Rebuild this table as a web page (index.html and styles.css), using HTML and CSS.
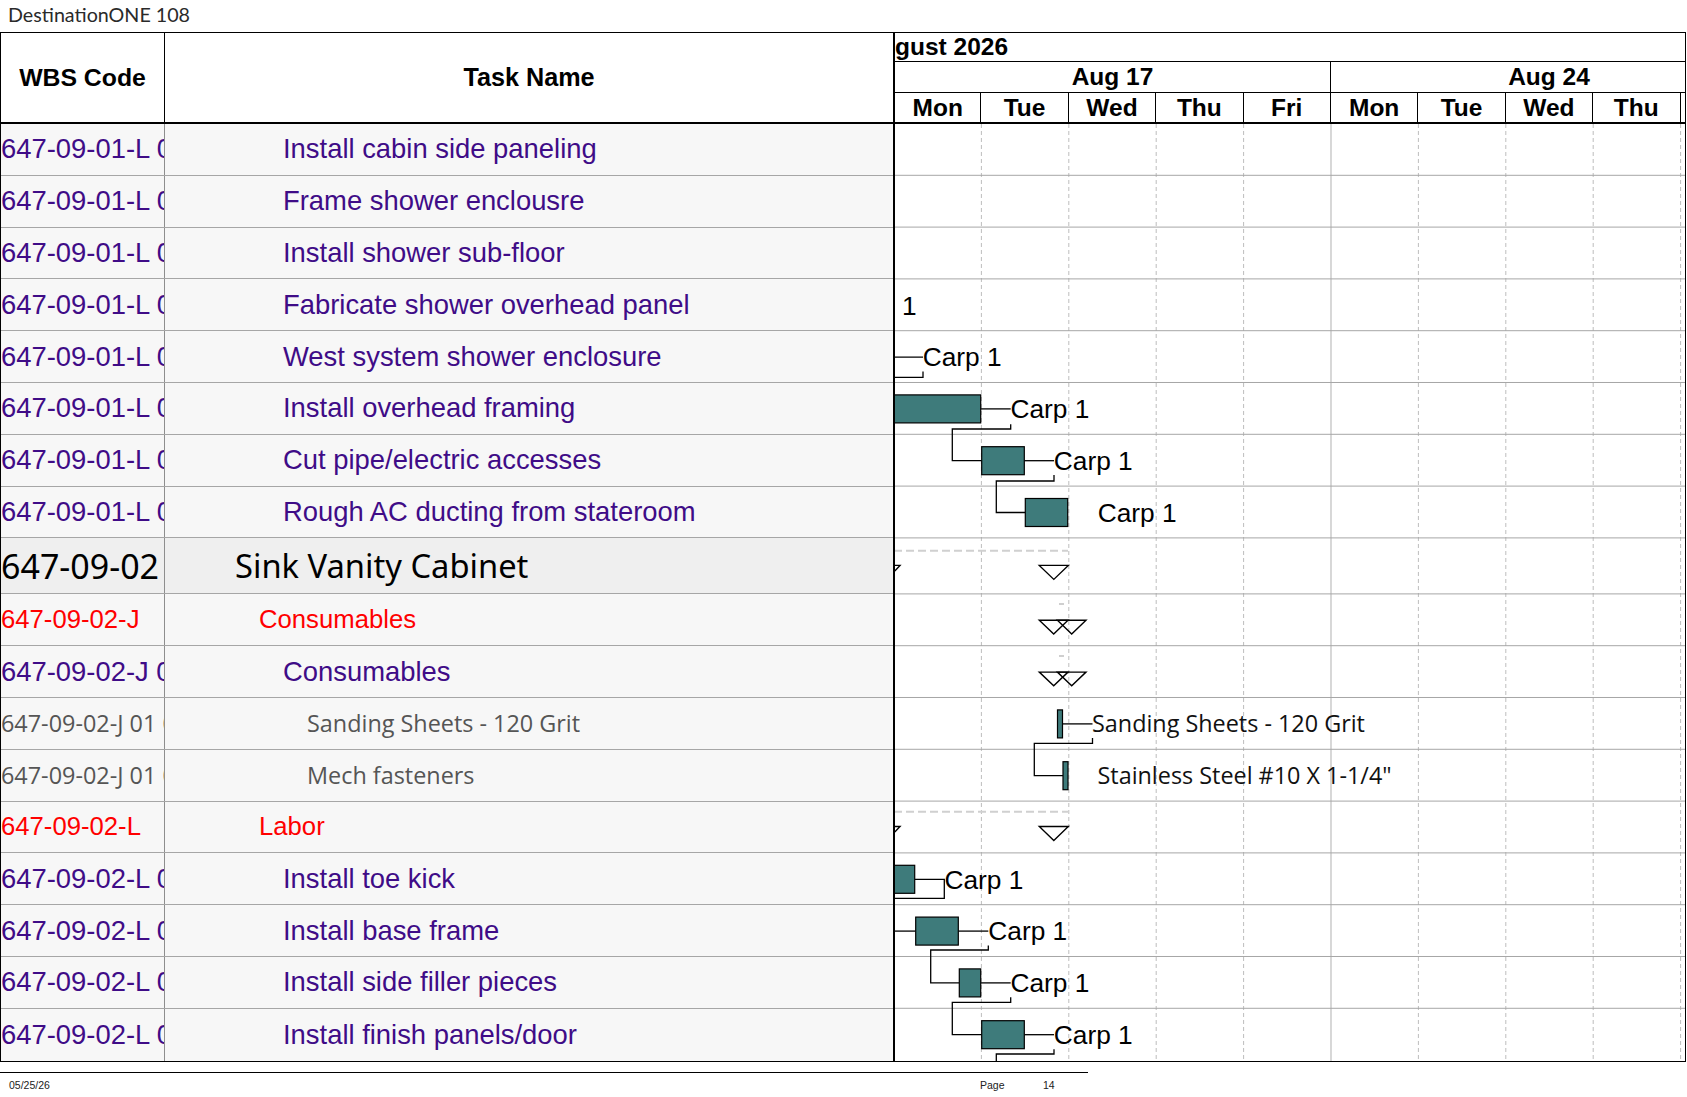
FILE: index.html
```html
<!DOCTYPE html>
<html lang="en">
<head>
<meta charset="utf-8">
<title>DestinationONE 108</title>
<link rel="stylesheet" href="styles.css">
</head>
<body>
<div class="doc-title">DestinationONE 108</div>
<div class="sheet">
  <div class="head">
    <div class="hcell wbs-h">WBS Code</div>
    <div class="hcell task-h">Task Name</div>
    <div class="timescale">
      <div class="ts-month">gust 2026</div>
      <div class="ts-weeks">
        <div class="ts-week first">Aug 17</div>
        <div class="ts-week">Aug 24</div>
      </div>
      <div class="ts-days">
        <div>Mon</div><div>Tue</div><div>Wed</div><div>Thu</div><div>Fri</div>
        <div>Mon</div><div>Tue</div><div>Wed</div><div>Thu</div><div></div>
      </div>
    </div>
  </div>
  <div class="body">
    <div class="grid">
      <div class="row task"><div class="wbs">647-09-01-L 01</div><div class="name">Install cabin side paneling</div></div>
      <div class="row task"><div class="wbs">647-09-01-L 01</div><div class="name">Frame shower enclousre</div></div>
      <div class="row task"><div class="wbs">647-09-01-L 01</div><div class="name">Install shower sub-floor</div></div>
      <div class="row task"><div class="wbs">647-09-01-L 01</div><div class="name">Fabricate shower overhead panel</div></div>
      <div class="row task"><div class="wbs">647-09-01-L 01</div><div class="name">West system shower enclosure</div></div>
      <div class="row task"><div class="wbs">647-09-01-L 01</div><div class="name">Install overhead framing</div></div>
      <div class="row task"><div class="wbs">647-09-01-L 01</div><div class="name">Cut pipe/electric accesses</div></div>
      <div class="row task"><div class="wbs">647-09-01-L 01</div><div class="name">Rough AC ducting from stateroom</div></div>
      <div class="row sum"><div class="wbs">647-09-02</div><div class="name">Sink Vanity Cabinet</div></div>
      <div class="row grp"><div class="wbs">647-09-02-J</div><div class="name">Consumables</div></div>
      <div class="row task"><div class="wbs">647-09-02-J 01</div><div class="name">Consumables</div></div>
      <div class="row res"><div class="wbs">647-09-02-J 01 01</div><div class="name">Sanding Sheets - 120 Grit</div></div>
      <div class="row res"><div class="wbs">647-09-02-J 01 02</div><div class="name">Mech fasteners</div></div>
      <div class="row grp"><div class="wbs">647-09-02-L</div><div class="name">Labor</div></div>
      <div class="row task"><div class="wbs">647-09-02-L 01</div><div class="name">Install toe kick</div></div>
      <div class="row task"><div class="wbs">647-09-02-L 01</div><div class="name">Install base frame</div></div>
      <div class="row task"><div class="wbs">647-09-02-L 01</div><div class="name">Install side filler pieces</div></div>
      <div class="row task"><div class="wbs">647-09-02-L 01</div><div class="name">Install finish panels/door</div></div>
    </div>
    <div class="chart">
      <svg width="790" height="936.6" viewBox="1 0 790 936.6" xmlns="http://www.w3.org/2000/svg">
        <g class="vdash">
          <line x1="87.4" y1="0" x2="87.4" y2="937"/>
          <line x1="174.8" y1="0" x2="174.8" y2="937"/>
          <line x1="262.2" y1="0" x2="262.2" y2="937"/>
          <line x1="349.6" y1="0" x2="349.6" y2="937"/>
          <line x1="524.4" y1="0" x2="524.4" y2="937"/>
          <line x1="611.8" y1="0" x2="611.8" y2="937"/>
          <line x1="699.2" y1="0" x2="699.2" y2="937"/>
          <line x1="786.6" y1="0" x2="786.6" y2="937"/>
        </g>
        <line class="vsolid" x1="437" y1="0" x2="437" y2="937"/>
        <g class="hrow">
          <line x1="0" y1="51.3" x2="792" y2="51.3"/>
          <line x1="0" y1="103.1" x2="792" y2="103.1"/>
          <line x1="0" y1="154.9" x2="792" y2="154.9"/>
          <line x1="0" y1="206.7" x2="792" y2="206.7"/>
          <line x1="0" y1="258.5" x2="792" y2="258.5"/>
          <line x1="0" y1="310.3" x2="792" y2="310.3"/>
          <line x1="0" y1="362.1" x2="792" y2="362.1"/>
          <line x1="0" y1="413.9" x2="792" y2="413.9"/>
          <line x1="0" y1="469.9" x2="792" y2="469.9"/>
          <line x1="0" y1="521.7" x2="792" y2="521.7"/>
          <line x1="0" y1="573.5" x2="792" y2="573.5"/>
          <line x1="0" y1="625.3" x2="792" y2="625.3"/>
          <line x1="0" y1="677.1" x2="792" y2="677.1"/>
          <line x1="0" y1="728.9" x2="792" y2="728.9"/>
          <line x1="0" y1="780.7" x2="792" y2="780.7"/>
          <line x1="0" y1="832.5" x2="792" y2="832.5"/>
          <line x1="0" y1="884.3" x2="792" y2="884.3"/>
        </g>
        <g class="sumline">
          <line x1="0" y1="426.8" x2="174" y2="426.8"/>
          <line x1="0" y1="687.7" x2="174" y2="687.7"/>
        </g>
        <g class="tick">
          <line x1="165" y1="480" x2="170" y2="480"/>
          <line x1="165" y1="532" x2="170" y2="532"/>
        </g>
        <g class="link">
          <polyline points="-5,233.1 29,233.1"/>
          <polyline points="29,247.5 29,253.3 -5,253.3"/>
          <polyline points="86.7,284.9 116.7,284.9"/>
          <polyline points="116.7,300.3 116.7,305 58.3,305 58.3,336.7 87.7,336.7"/>
          <polyline points="130.3,336.7 160,336.7"/>
          <polyline points="160,351 160,357 102.3,357 102.3,388.5 131.3,388.5"/>
          <polyline points="168.5,599.9 198.5,599.9"/>
          <polyline points="198.5,614 198.5,619.3 140.3,619.3 140.3,651.7 169,651.7"/>
          <polyline points="20.7,755.3 50.3,755.3 50.3,774.3 -5,774.3"/>
          <polyline points="-5,807.1 21.7,807.1"/>
          <polyline points="64.3,807.1 94.3,807.1"/>
          <polyline points="94.3,821.5 94.3,826 36.7,826 36.7,858.9 65.3,858.9"/>
          <polyline points="86.7,858.9 116.7,858.9"/>
          <polyline points="116.7,873.3 116.7,878.3 58.3,878.3 58.3,910.7 87.7,910.7"/>
          <polyline points="130.3,910.7 160,910.7"/>
          <polyline points="160,925.2 160,930 102.3,930 102.3,940"/>
        </g>
        <g class="bar">
          <rect x="0.3" y="270.9" width="86.4" height="28"/>
          <rect x="87.7" y="322.7" width="42.6" height="28"/>
          <rect x="131.3" y="374.5" width="42.4" height="28"/>
          <rect x="163.5" y="585.9" width="5" height="28"/>
          <rect x="169" y="637.7" width="5" height="28"/>
          <rect x="0.3" y="741.3" width="20.4" height="28"/>
          <rect x="21.7" y="793.1" width="42.6" height="28"/>
          <rect x="65.3" y="844.9" width="21.4" height="28"/>
          <rect x="87.7" y="896.7" width="42.6" height="28"/>
        </g>
        <g class="ms">
          <polyline class="open" points="0,441.4 6,441.4 0.8,447"/>
          <polygon class="filled" points="145.3,441.4 174.3,441.4 159.8,455.4"/>
          <polygon class="open" points="145.3,496.3 174,496.3 159.7,510"/>
          <polygon class="open" points="163.4,496.3 192,496.3 177.7,510"/>
          <polygon class="open" points="145.3,548.1 174,548.1 159.7,561.8"/>
          <polygon class="open" points="163.4,548.1 192,548.1 177.7,561.8"/>
          <polyline class="open" points="0,702.5 6,702.5 0.8,708"/>
          <polygon class="filled" points="145.3,702.5 174.3,702.5 159.8,716.5"/>
        </g>
        <g class="lbl">
          <text x="-56.4" y="190.7">Carp 1</text>
          <text x="28.7" y="242.5">Carp 1</text>
          <text x="116.5" y="294.3">Carp 1</text>
          <text x="159.8" y="346.1">Carp 1</text>
          <text x="203.7" y="397.9">Carp 1</text>
          <text x="50.5" y="764.7">Carp 1</text>
          <text x="94.3" y="816.5">Carp 1</text>
          <text x="116.5" y="868.3">Carp 1</text>
          <text x="159.8" y="920.1">Carp 1</text>
        </g>
        <g class="lbl-res">
          <text x="198" y="608.3">Sanding Sheets - 120 Grit</text>
          <text x="203.5" y="660.1">Stainless Steel #10 X 1-1/4"</text>
        </g>
      </svg>
    </div>
  </div>
</div>
<div class="footer">
  <div class="f-date">05/25/26</div>
  <div class="f-page">Page</div>
  <div class="f-num">14</div>
</div>
</body>
</html>
```
FILE: styles.css
```css
* { box-sizing: border-box; }
html, body { margin: 0; padding: 0; background: #fff; }
body {
  width: 1687px;
  height: 1097px;
  overflow: hidden;
  font-family: "Liberation Sans", Arial, sans-serif;
  color: #000;
}
.doc-title {
  height: 32px;
  line-height: 29px;
  padding-left: 8px;
  font-family: Lato, "Open Sans", sans-serif;
  font-size: 19.7px;
  color: #2a2a2a;
}
.sheet {
  width: 1686px;
  border: 1px solid #000;
}
.head {
  display: flex;
  height: 91px;
  border-bottom: 2px solid #000;
}
.hcell {
  display: flex;
  align-items: center;
  justify-content: center;
  font-weight: bold;
  font-size: 24.8px;
}
.wbs-h { width: 164px; border-right: 1px solid #000; }
.task-h { width: 728px; font-size: 25.2px; }
.timescale {
  width: 792px;
  border-left: 2px solid #000;
  display: flex;
  flex-direction: column;
  overflow: hidden;
  font-weight: bold;
  font-size: 24.5px;
}
.ts-month {
  height: 29px;
  border-bottom: 1px solid #000;
  line-height: 28px;
  white-space: nowrap;
}
.ts-weeks {
  height: 31px;
  border-bottom: 1px solid #000;
  display: flex;
  overflow: hidden;
}
.ts-week {
  flex: 0 0 437px;
  border-right: 1px solid #000;
  text-align: center;
  line-height: 30px;
  white-space: nowrap;
}
.ts-week.first { flex-basis: 436px; }
.ts-days {
  height: 29px;
  display: grid;
  grid-template-columns: 86.4px repeat(8, 87.4px) 1fr;
}
.ts-days div {
  border-right: 1px solid #000;
  text-align: center;
  line-height: 29px;
}
.ts-days div:last-child { border-right: 0; }

.body { display: flex; }
.grid { width: 892px; }
.row {
  display: flex;
  height: 51.8px;
  border-bottom: 1px solid #a6a6a6;
  background: #f7f7f7;
}
.row:last-child { border-bottom: 0; }
.wbs {
  width: 164px;
  flex: 0 0 164px;
  border-right: 1px solid #8e8e8e;
  overflow: hidden;
  white-space: nowrap;
  display: flex;
  align-items: center;
}
.name {
  flex: 1;
  display: flex;
  align-items: center;
  white-space: nowrap;
  overflow: hidden;
}
.row.task { color: #3f0c87; font-size: 27.4px; }
.row.task .name { padding-left: 118px; }
.row.grp { color: #f00; font-size: 25.7px; }
.row.grp .name { padding-left: 94px; }
.row.res { color: #555; font-family: "Open Sans", sans-serif; font-size: 23.4px; }
.row.res .name { padding-left: 142px; }
.row.sum {
  height: 56px;
  background: #efefef;
  font-family: "Noto Sans", sans-serif;
  color: #000;
}
.row.sum .wbs { font-size: 34px; }
.row.sum .name { padding-left: 70px; font-size: 32.7px; }

.chart {
  width: 792px;
  border-left: 2px solid #000;
  background: #fff;
}
.chart svg { display: block; overflow: hidden; }
.vdash line { stroke: #bdbdbd; stroke-width: 1; stroke-dasharray: 4 3; }
.vsolid { stroke: #b0b0b0; stroke-width: 1; }
.hrow line { stroke: #a6a6a6; stroke-width: 1; }
.sumline line { stroke: #d0d0d0; stroke-width: 2; stroke-dasharray: 8 4; }
.tick line { stroke: #cfcfcf; stroke-width: 2; }
.link polyline { fill: none; stroke: #000; stroke-width: 1.3; }
.bar rect { fill: #3e7b7b; stroke: #000; stroke-width: 1.2; }
.ms .open { fill: none; stroke: #000; stroke-width: 1.4; }
.ms .filled { fill: #fff; stroke: #000; stroke-width: 1.4; }
.lbl text { font-family: "Liberation Sans", Arial, sans-serif; font-size: 26.3px; fill: #000; }
.lbl-res text { font-family: "Open Sans", sans-serif; font-size: 23.4px; fill: #111; }

.footer {
  width: 1088px;
  margin-top: 10px;
  border-top: 1px solid #000;
  display: flex;
  font-size: 10.5px;
  line-height: 12px;
  padding-top: 6px;
  color: #222;
}
.f-date { width: 980px; padding-left: 9px; }
.f-page { width: 63px; }
```
